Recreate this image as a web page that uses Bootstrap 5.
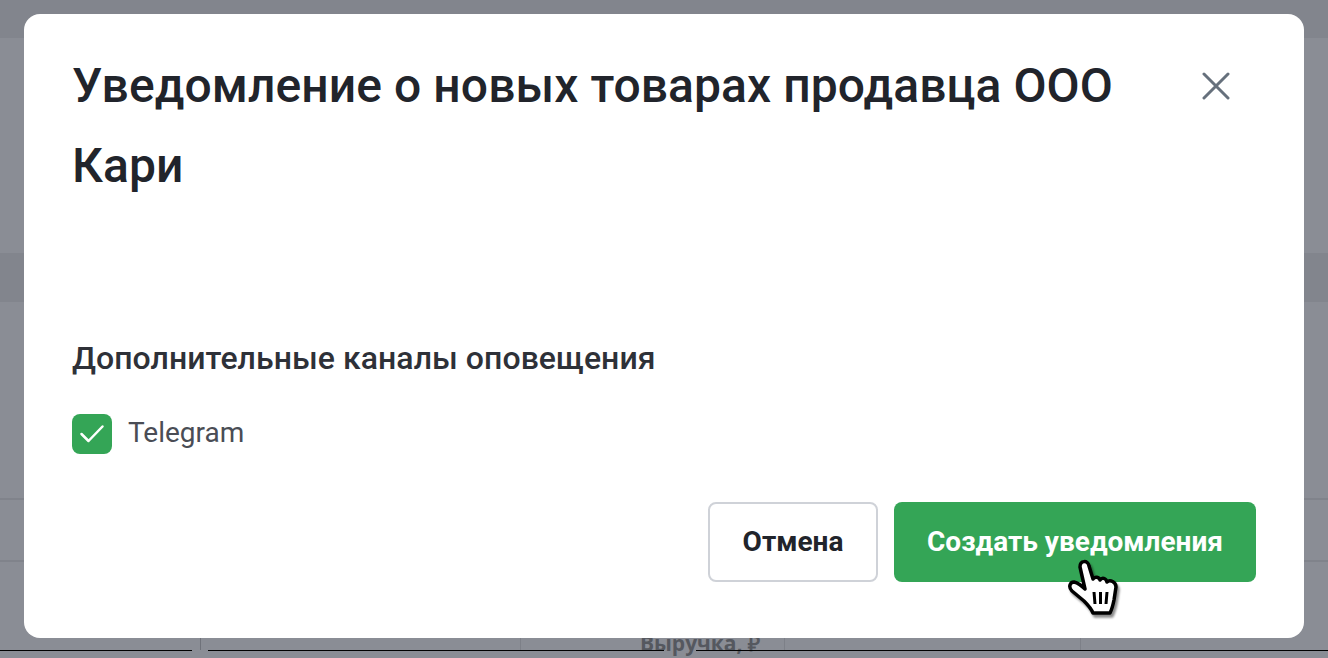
<!DOCTYPE html>
<html lang="ru">

<head>
    <meta charset="UTF-8">
    <meta name="viewport" content="width=device-width, initial-scale=1.0">
    <title>Уведомление о новых товарах</title>
    <link rel="stylesheet" href="https://cdn.jsdelivr.net/npm/bootstrap@5.3.0/dist/css/bootstrap.min.css">
    <script src="https://cdn.jsdelivr.net/npm/bootstrap@5.3.0/dist/js/bootstrap.bundle.min.js"></script>
    <style>
        html, body {
            height: 658px;
            overflow: hidden;
        }

        body {
            background: #8a8d95;
            font-family: Roboto, "Liberation Sans", sans-serif;
        }

        /* затемнённая страница за окном */
        .page-behind {
            height: 658px;
        }

        .band-top {
            height: 38px;
            background: #82858d;
        }

        .band-mid {
            height: 49px;
            margin-top: 215px;
            background: #82858d;
        }

        .rule-a {
            height: 198px;
            border-bottom: 2px solid #80838b;
        }

        .rule-b {
            height: 62px;
            border-bottom: 2px solid #80838b;
        }

        .head-cells {
            height: 88px;
        }

        .head-cell {
            height: 88px;
            border-right: 1px solid #7d8088;
        }

        .cell-name {
            width: 201px;
            border-right-color: #6f727a;
        }

        .cell-a {
            width: 320px;
        }

        .cell-b {
            width: 264px;
            padding-top: 69px;
            padding-right: 24px;
            color: #55585f;
            font-family: "Open Sans", sans-serif;
            font-size: 21px;
            font-weight: 700;
            line-height: 24px;
            text-align: right;
            white-space: nowrap;
        }

        .cell-c {
            width: 296px;
        }

        .edge-bar {
            height: 1px;
        }

        .edge-bar span {
            background: #000;
        }

        .edge-a {
            width: 192px;
        }

        .edge-b {
            width: 456px;
            margin-left: 16px;
        }

        .edge-c {
            margin-left: 32px;
        }

        /* окно */
        .notify-modal {
            top: 14px;
            left: 24px;
            width: 1280px;
            height: 624px;
            padding: 32px 48px 56px 48px;
            border-radius: 16px;
            background: #fff;
        }

        .notify-title {
            width: 1062px;
            margin: 0;
            color: #21242b;
            font-size: 48px;
            font-weight: 500;
            line-height: 80px;
            letter-spacing: .08px;
        }

        .notify-close {
            width: 28px;
            height: 28px;
            margin-top: 26px;
            margin-right: 26px;
            background: none;
            border: 0;
        }

        .notify-subtitle {
            margin-top: 132px;
            color: #2e3138;
            font-size: 32px;
            font-weight: 500;
            line-height: 40px;
            letter-spacing: .06px;
        }

        .notify-option {
            margin-top: 35px;
        }

        .notify-check {
            width: 40px;
            height: 40px;
            border-radius: 8px;
            background: #34a556;
        }

        .notify-label {
            padding-bottom: 2px;
            color: #4a4d55;
            font-size: 28px;
            line-height: 40px;
        }

        .notify-btn {
            height: 80px;
            border-radius: 8px;
            font-size: 28px;
            font-weight: 700;
        }

        .btn-cancel {
            width: 170px;
            border: 2px solid #cfd2d8;
            background: #fff;
            color: #21242b;
        }

        .btn-create {
            width: 362px;
            border: 0;
            background: #34a556;
            color: #fff;
        }

        .hand-cursor {
            left: 1060px;
            top: 555px;
            width: 70px;
            height: 70px;
            filter: drop-shadow(2px 3px 1px rgba(0, 0, 0, .45));
        }
    </style>
</head>

<body>
    <!-- страница под затемнением -->
    <div class="page-behind d-flex flex-column">
        <div class="band-top"></div>
        <div class="band-mid"></div>
        <div class="rule-a"></div>
        <div class="rule-b"></div>
        <div class="head-cells d-flex">
            <div class="head-cell cell-name"></div>
            <div class="head-cell cell-a"></div>
            <div class="head-cell cell-b">Выручка, ₽</div>
            <div class="head-cell cell-c"></div>
        </div>
        <div class="edge-bar d-flex">
            <span class="edge-a"></span>
            <span class="edge-b"></span>
            <span class="edge-c flex-grow-1"></span>
        </div>
    </div>

    <!-- окно уведомления -->
    <div class="notify-modal position-absolute d-flex flex-column">
        <div class="d-flex justify-content-between align-items-start">
            <h5 class="notify-title">Уведомление о новых товарах продавца ООО Кари</h5>
            <button class="notify-close p-0" type="button" aria-label="Закрыть">
                <svg class="d-block" width="28" height="28" viewBox="0 0 28 28" fill="none" stroke="#66707c" stroke-width="3" stroke-linecap="round">
                    <path d="M2 2 26 26M26 2 2 26" />
                </svg>
            </button>
        </div>

        <div class="notify-subtitle">Дополнительные каналы оповещения</div>

        <div class="notify-option d-flex align-items-center gap-3">
            <span class="notify-check d-flex align-items-center justify-content-center">
                <svg width="26" height="20" viewBox="0 0 26 20" fill="none" stroke="#fff" stroke-width="2.5" stroke-linecap="round" stroke-linejoin="round">
                    <path d="M2.5 10 9.5 17 23.5 2.5" />
                </svg>
            </span>
            <span class="notify-label">Telegram</span>
        </div>

        <div class="d-flex justify-content-end gap-3 mt-auto">
            <button class="btn notify-btn btn-cancel" type="button">Отмена</button>
            <button class="btn notify-btn btn-create" type="button">Создать уведомления</button>
        </div>
    </div>

    <!-- курсор мыши поверх кнопки -->
    <svg class="hand-cursor position-absolute" viewBox="0 0 70 70">
        <path d="M20 12C20 5 28 5 29 11L33 24C35 21 39 22 40 25 42 22 46 23 47 27 50 24 56 27 56 32L54 45C53 50 52 54 50 58L33 58C31 53 27 49 24 46L12 36C8 32 10 27 14 27 18 28 21 30 25 34Z" fill="#fff" stroke="#000" stroke-width="3.5" stroke-linejoin="round" />
        <path d="M34 37 35 49M40.500 37V49M47 37 46 49" fill="none" stroke="#000" stroke-width="3" />
    </svg>
</body>
</html>
